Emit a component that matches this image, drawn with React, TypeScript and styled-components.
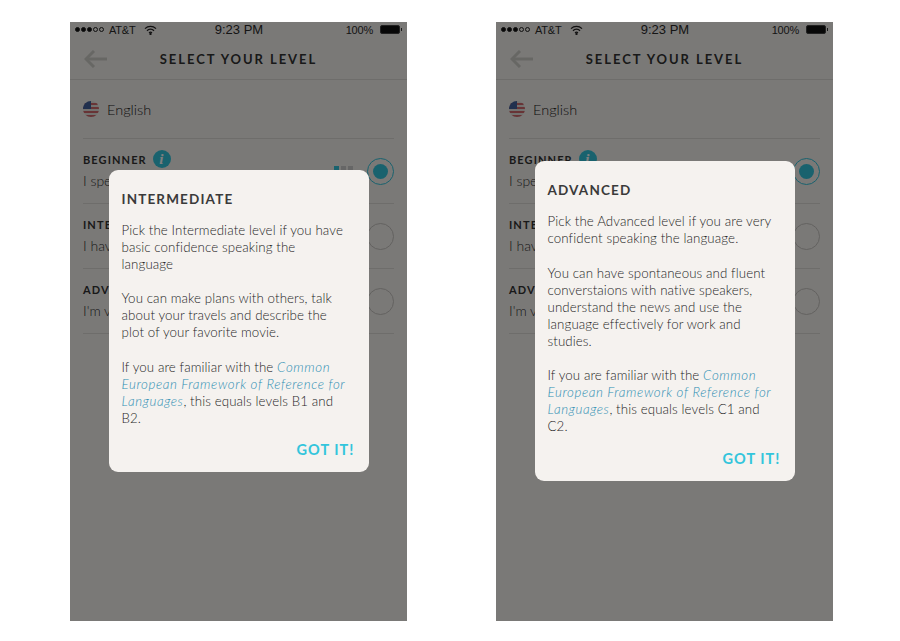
import React from "react";
import styled, { createGlobalStyle } from "styled-components";

const GlobalStyle = createGlobalStyle`
  html, body {
    margin: 0;
    padding: 0;
    background: #fff;
    font-family: "Lato", "Liberation Sans", sans-serif;
  }
`;

const Page = styled.div`
  display: flex;
  gap: 89px;
  width: 900px;
  height: 641px;
  box-sizing: border-box;
  padding: 22px 0 0 70px;
`;

const Phone = styled.div`
  position: relative;
  width: 337px;
  height: 599px;
  overflow: hidden;
  background: #f5f2ef;
  color: #333;
`;

const StatusBar = styled.div`
  display: grid;
  grid-template-columns: 1fr auto 1fr;
  align-items: center;
  height: 15px;
  padding: 0 4px 0 5px;
  font-family: "Liberation Sans", Arial, sans-serif;
  font-size: 11px;
  letter-spacing: -0.2px;
  color: #2b2b2b;
`;

const StatusLeft = styled.div`
  display: flex;
  align-items: center;
  gap: 5px;
`;

const StatusRight = styled.div`
  display: flex;
  align-items: center;
  justify-content: flex-end;
  gap: 7px;
`;

const Signal = styled.div`
  display: flex;
  gap: 1px;
`;

const SignalDot = styled.span<{ $on: boolean }>`
  width: 5px;
  height: 5px;
  box-sizing: border-box;
  border-radius: 50%;
  border: 0.7px solid #222;
  background: ${({ $on }) => ($on ? "#111" : "transparent")};
`;

const WifiIcon = styled.svg`
  display: block;
  margin-left: 3px;
`;

const Time = styled.div`
  font-size: 13px;
  letter-spacing: 0;
`;

const Battery = styled.div`
  position: relative;
  width: 18px;
  height: 7px;
  border: 1px solid #444;
  border-radius: 2px;
  background: #111;
  margin-right: 3px;

  &::after {
    content: "";
    position: absolute;
    right: -3px;
    top: 2px;
    width: 1px;
    height: 3px;
    background: #333;
  }
`;

const NavBar = styled.div`
  display: grid;
  grid-template-columns: 1fr auto 1fr;
  align-items: center;
  height: 41px;
  padding: 1px 14px 0;
  border-bottom: 1px solid #dcdad6;
`;

const BackIcon = styled.svg`
  display: block;
  width: 23px;
  height: 18px;
`;

const NavTitle = styled.div`
  font-size: 13px;
  font-weight: 700;
  letter-spacing: 1.95px;
  color: #333;
`;

const List = styled.div`
  padding: 0 13px;
`;

const LanguageRow = styled.div`
  display: flex;
  align-items: center;
  gap: 8px;
  height: 58px;
  border-bottom: 1px solid #dcdad6;
  font-size: 14.5px;
  font-weight: 300;
  color: #222;
`;

const Flag = styled.svg`
  display: block;
  width: 16px;
  height: 16px;
`;

const LevelRow = styled.div`
  display: flex;
  align-items: center;
  height: 64px;
  border-bottom: 1px solid #dcdad6;
`;

const LevelText = styled.div`
  flex: 1;
  display: flex;
  flex-direction: column;
  gap: 5px;
  padding-bottom: 2px;
`;

const LevelName = styled.div`
  display: flex;
  align-items: center;
  gap: 6px;
  height: 16px;
  font-size: 11px;
  font-weight: 700;
  letter-spacing: 1.1px;
  color: #333;
`;

const InfoBadge = styled.span`
  display: flex;
  align-items: center;
  justify-content: center;
  width: 18px;
  height: 18px;
  border-radius: 50%;
  background: #33c5dc;
  color: #fff;
  font-family: "Liberation Serif", serif;
  font-size: 15px;
  font-style: italic;
  font-weight: 700;
`;

const LevelSub = styled.div`
  font-size: 14px;
  font-weight: 300;
  color: #333;
`;

const Bars = styled.div`
  display: flex;
  gap: 2px;
  margin: 0 14px 5px 0;
`;

const Bar = styled.span<{ $on: boolean }>`
  width: 5px;
  height: 5px;
  background: ${({ $on }) => ($on ? "#33c5dc" : "#ccc")};
`;

const Radio = styled.div<{ $checked: boolean }>`
  display: flex;
  align-items: center;
  justify-content: center;
  width: 27px;
  height: 27px;
  box-sizing: border-box;
  border-radius: 50%;
  border: 1px solid ${({ $checked }) => ($checked ? "#33c5dc" : "#c6c4c0")};

  &::after {
    content: "";
    display: ${({ $checked }) => ($checked ? "block" : "none")};
    width: 15px;
    height: 15px;
    border-radius: 50%;
    background: #33c5dc;
  }
`;

const Overlay = styled.div`
  position: absolute;
  inset: 0;
  display: flex;
  align-items: center;
  justify-content: center;
  padding-bottom: 1px;
  background: rgba(0, 0, 0, 0.5);
`;

const Modal = styled.div`
  width: 260px;
  box-sizing: border-box;
  padding: 20px 13px 13px;
  border-radius: 9px;
  background: #f5f2ef;
`;

const ModalTitle = styled.div`
  font-size: 13.5px;
  line-height: 18px;
  font-weight: 700;
  letter-spacing: 1.15px;
  color: #3a3a3a;
  margin-bottom: 14px;
`;

const Paragraph = styled.p`
  margin: 0 0 17.1px;
  padding-right: 8px;
  font-size: 13.3px;
  font-weight: 300;
  line-height: 17.1px;
  letter-spacing: 0.1px;
  color: #1f1f1f;
`;

const RefLink = styled.em`
  color: #2f8fb3;
  letter-spacing: 0.6px;
`;

const GotIt = styled.div`
  text-align: right;
  font-size: 14.5px;
  line-height: 18px;
  font-weight: 700;
  letter-spacing: 1.05px;
  color: #33c5dc;
  margin: -3px 1px 0 0;
`;

type ScreenProps = {
  title: string;
  paragraphs: string[];
  levels: [string, string];
};

const levelRows = [
  { name: "BEGINNER", sub: "I speak a little", selected: true },
  { name: "INTERMEDIATE", sub: "I have basic confidence", selected: false },
  { name: "ADVANCED", sub: "I'm very confident", selected: false },
];

const Screen = ({ title, paragraphs, levels }: ScreenProps) => (
  <Phone>
    <StatusBar>
      <StatusLeft>
        <Signal>
          {[true, true, true, false, false].map((on, i) => (
            <SignalDot key={i} $on={on} />
          ))}
        </Signal>
        AT&amp;T
        <WifiIcon width="13" height="10" viewBox="0 0 13 10" fill="none" stroke="#222" strokeWidth="1.3">
          <path d="M1 3.6a8 8 0 0 1 11 0" />
          <path d="M3 5.7a5 5 0 0 1 7 0" />
          <path d="M5 7.7a2.4 2.4 0 0 1 3 0" />
          <circle cx="6.5" cy="9" r="0.5" fill="#222" />
        </WifiIcon>
      </StatusLeft>
      <Time>9:23 PM</Time>
      <StatusRight>
        100%
        <Battery />
      </StatusRight>
    </StatusBar>
    <NavBar>
      <BackIcon viewBox="0 0 23 18" fill="none" stroke="#cfcfc9" strokeWidth="3">
        <path d="M23 9H2" />
        <path d="M10 1 2 9l8 8" />
      </BackIcon>
      <NavTitle>SELECT YOUR LEVEL</NavTitle>
    </NavBar>
    <List>
      <LanguageRow>
        <Flag viewBox="0 0 16 16">
          <clipPath id={`flag-${title}`}>
            <circle cx="8" cy="8" r="8" />
          </clipPath>
          <g clipPath={`url(#flag-${title})`}>
            <rect width="16" height="16" fill="#e4e2de" />
            <path d="M0 2h16v2H0zM0 6h16v2H0zM0 10h16v2H0zM0 14h16v2H0z" fill="#d0686c" />
            <rect width="8" height="8" fill="#42609c" />
          </g>
        </Flag>
        English
      </LanguageRow>
      {levelRows.map((row) => (
        <LevelRow key={row.name}>
          <LevelText>
            <LevelName>
              {row.name}
              {row.selected && <InfoBadge>i</InfoBadge>}
            </LevelName>
            <LevelSub>{row.sub}</LevelSub>
          </LevelText>
          {row.selected && (
            <Bars>
              <Bar $on />
              <Bar $on={false} />
              <Bar $on={false} />
            </Bars>
          )}
          <Radio $checked={row.selected} />
        </LevelRow>
      ))}
    </List>
    <Overlay>
      <Modal>
        <ModalTitle>{title}</ModalTitle>
        {paragraphs.map((text) => (
          <Paragraph key={text}>{text}</Paragraph>
        ))}
        <Paragraph>
          If you are familiar with the <RefLink>Common European Framework of Reference for Languages</RefLink>, this equals levels {levels[0]} and {levels[1]}.
        </Paragraph>
        <GotIt>GOT IT!</GotIt>
      </Modal>
    </Overlay>
  </Phone>
);

export default function App() {
  return (
    <>
      <GlobalStyle />
      <Page>
        <Screen
          title="INTERMEDIATE"
          paragraphs={[
            "Pick the Intermediate level if you have basic confidence speaking the language",
            "You can make plans with others, talk about your travels and describe the plot of your favorite movie.",
          ]}
          levels={["B1", "B2"]}
        />
        <Screen
          title="ADVANCED"
          paragraphs={[
            "Pick the Advanced level if you are very confident speaking the language.",
            "You can have spontaneous and fluent converstaions with native speakers, understand the news and use the language effectively for work and studies.",
          ]}
          levels={["C1", "C2"]}
        />
      </Page>
    </>
  );
}
